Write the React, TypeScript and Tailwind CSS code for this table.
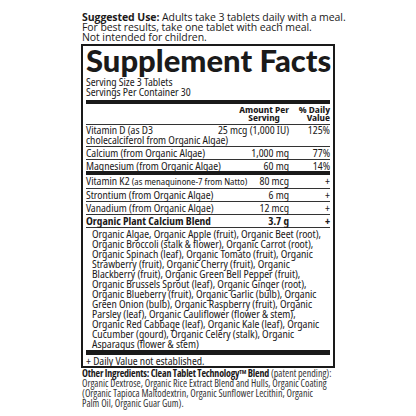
import React from "react";

function Row({ name, amount, dv, bold, last }: { name: React.ReactNode; amount: string; dv: string; bold?: boolean; last?: boolean }) {
  return (
    <div className={`flex items-start leading-[10px] pt-[1px] ${last ? "" : "pb-[1px] border-b border-[#333]"} ${bold ? "font-bold" : ""}`}>
      <div className="flex-1 min-w-0 whitespace-nowrap">{name}</div>
      <div className="text-right whitespace-nowrap">{amount}</div>
      <div className="w-[41px] text-right">{dv}</div>
    </div>
  );
}

const ingredients = [
  "Organic Algae, Organic Apple (fruit), Organic Beet (root),",
  "Organic Broccoli (stalk & flower), Organic Carrot (root),",
  "Organic Spinach (leaf), Organic Tomato (fruit), Organic",
  "Strawberry (fruit), Organic Cherry (fruit), Organic",
  "Blackberry (fruit), Organic Green Bell Pepper (fruit),",
  "Organic Brussels Sprout (leaf), Organic Ginger (root),",
  "Organic Blueberry (fruit), Organic Garlic (bulb), Organic",
  "Green Onion (bulb), Organic Raspberry (fruit), Organic",
  "Parsley (leaf), Organic Cauliflower (flower & stem),",
  "Organic Red Cabbage (leaf), Organic Kale (leaf), Organic",
  "Cucumber (gourd), Organic Celery (stalk), Organic",
  "Asparagus (flower & stem)",
];

export default function App() {
  return (
    <div className="w-[416px] h-[416px] bg-white text-[#1c1a1a] overflow-hidden">
      <div className="pl-[81px] pt-[12px]">
        <div className="font-['Open_Sans',sans-serif] text-[10.5px] leading-[10px] tracking-[-0.08px] pl-[1px] whitespace-nowrap">
          <p><span className="font-bold">Suggested Use:</span> Adults take 3 tablets daily with a meal.</p>
          <p>For best results, take one tablet with each meal.</p>
          <p>Not intended for children.</p>
        </div>
        <div className="mt-[2px] w-[254px] border-2 border-[#1a1a1a] px-[3px] font-['Noto_Sans_Display','Open_Sans',sans-serif] font-stretch-semi-condensed text-[10px]">
          <div className="font-['Lato',sans-serif] font-stretch-normal text-[31px] font-black leading-[28px] text-[#1a1a1a] whitespace-nowrap">Supplement Facts</div>
          <div className="leading-[10px] mt-[3px]">
            <p>Serving Size 3 Tablets</p>
            <p>Servings Per Container 30</p>
          </div>
          <div className="h-[4px] bg-[#1a1a1a] mt-[3px]" />
          <div className="flex items-end border-b border-[#333] font-bold text-[9.5px] leading-[8px] pt-[2px] pb-[2px]">
            <div className="flex-1" />
            <div className="text-center">Amount Per<br />Serving</div>
            <div className="w-[41px] text-right">% Daily<br />Value</div>
          </div>
          <div className="leading-[10px] pb-[1px] border-b border-[#333]">
            <div className="flex items-start">
              <div className="flex-1">Vitamin D (as D3</div>
              <div className="text-right">25 mcg (1,000 IU)</div>
              <div className="w-[41px] text-right">125%</div>
            </div>
            <div>cholecalciferol from Organic Algae)</div>
          </div>
          <Row name="Calcium (from Organic Algae)" amount="1,000 mg" dv="77%" />
          <Row name="Magnesium (from Organic Algae)" amount="60 mg" dv="14%" last />
          <div className="h-[4px] bg-[#1a1a1a]" />
          <Row name={<>Vitamin K2 <span className="text-[9px]">(as menaquinone-7 from Natto)</span></>} amount="80 mcg" dv="+" />
          <Row name="Strontium (from Organic Algae)" amount="6 mg" dv="+" />
          <Row name="Vanadium (from Organic Algae)" amount="12 mcg" dv="+" />
          <Row name="Organic Plant Calcium Blend" amount="3.7 g" dv="+" bold />
          <div className="pl-[6px] leading-[10px] pt-[1px] pb-[1px] whitespace-nowrap">
            {ingredients.map((l) => (
              <div key={l}>{l}</div>
            ))}
          </div>
          <div className="h-[5px] bg-[#1a1a1a]" />
          <div className="leading-[10px] pt-[1px]">+ Daily Value not established.</div>
        </div>
        <div className="font-['Open_Sans',sans-serif] font-stretch-condensed text-[10px] leading-[10px] pl-[1px] whitespace-nowrap text-[#333]">
          <p><span className="font-bold text-[#1c1a1a] tracking-[-0.2px]">Other Ingredients: Clean Tablet Technology<sup className="text-[6px]">TM</sup> Blend</span> (patent pending):</p>
          <p>Organic Dextrose, Organic Rice Extract Blend and Hulls, Organic Coating</p>
          <p>(Organic Tapioca Maltodextrin, Organic Sunflower Lecithin, Organic</p>
          <p>Palm Oil, Organic Guar Gum).</p>
        </div>
      </div>
    </div>
  );
}
